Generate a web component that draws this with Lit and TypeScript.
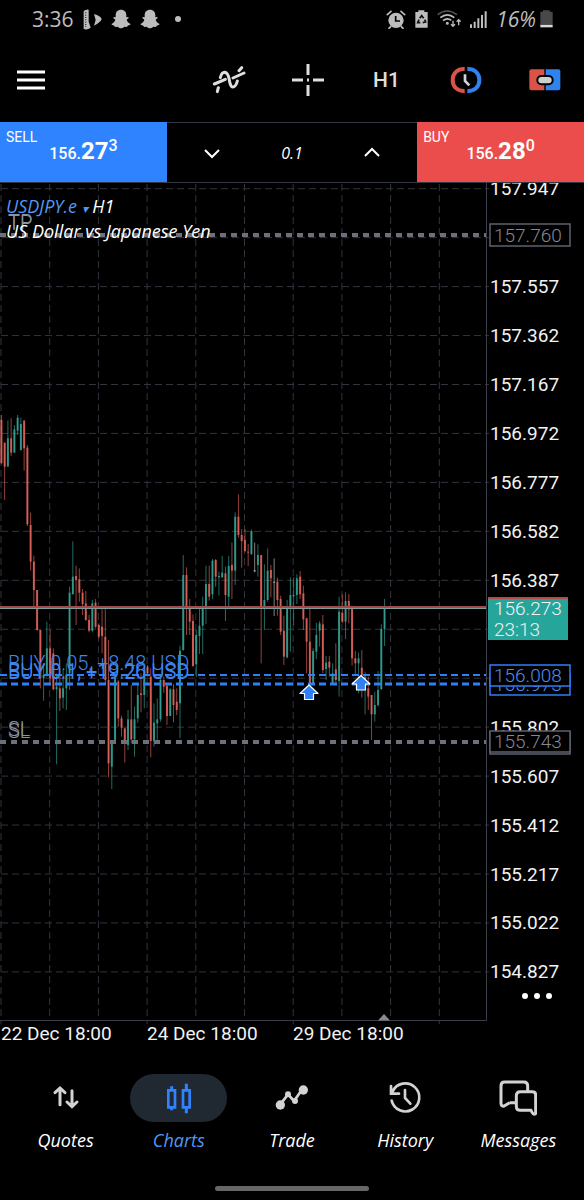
import { LitElement, html, svg, css } from "lit";
import { customElement, property, state } from "lit/decorators.js";

type Tone = "r" | "g" | "w";
// tone, wick top, body top, body bottom, wick bottom
type Bar = [Tone, number, number, number, number];

const STEP = 3.247;
const TOP = 183;

// Bar levels are stored in thirds of a unit, counted down from each group's base.
const GROUPS: { base: number; bars: Bar[] }[] = [
  {
    base: 400,
    bars: [
      ["r", 45, 60, 190, 190], ["r", 128, 128, 200, 300], ["g", 62, 115, 200, 200], ["r", 55, 115, 158, 168],
      ["g", 75, 88, 158, 158], ["g", 45, 53, 92, 105], ["g", 53, 72, 150, 152], ["r", 60, 62, 145, 212],
      ["r", 135, 143, 373, 378], ["r", 338, 375, 485, 512], ["r", 467, 485, 570, 618], ["r", 570, 570, 690, 692],
      ["r", 690, 690, 835, 865], ["g", 790, 825, 835, 902], ["g", 665, 745, 825, 830], ["r", 690, 745, 835, 850],
      ["r", 745, 760, 868, 870], ["g", 820, 860, 868, 1093], ["r", 797, 865, 895, 933], ["g", 810, 865, 893, 925],
      ["g", 790, 825, 865, 930], ["g", 560, 578, 820, 870], ["g", 424, 530, 583, 583], ["r", 497, 528, 540, 675],
      ["r", 505, 538, 578, 605], ["r", 567, 578, 612, 645], ["r", 573, 610, 660, 662], ["r", 645, 660, 692, 697],
      ["g", 600, 610, 692, 697], ["r", 597, 608, 680, 685], ["r", 670, 675, 710, 715], ["r", 620, 680, 708, 760],
      ["r", 620, 710, 840, 852], ["r", 720, 840, 1090, 1132], ["g", 1030, 1030, 1100, 1167], ["g", 835, 835, 1028, 1030],
    ],
  },
  {
    base: 480,
    bars: [
      ["r", 600, 605, 715, 740], ["r", 707, 715, 743, 770], ["r", 745, 745, 790, 848], ["g", 690, 718, 795, 810],
      ["r", 615, 718, 778, 790], ["g", 680, 718, 778, 830], ["g", 615, 645, 715, 728], ["r", 580, 640, 645, 697],
      ["g", 560, 570, 645, 685], ["r", 555, 560, 580, 590], ["r", 565, 590, 783, 832], ["g", 670, 728, 783, 800],
      ["g", 655, 718, 730, 780], ["g", 590, 600, 718, 725], ["r", 590, 600, 620, 638], ["r", 615, 618, 708, 735],
      ["g", 625, 628, 708, 708], ["r", 612, 628, 675, 727], ["r", 625, 665, 690, 705], ["g", 497, 512, 670, 775],
      ["g", 225, 285, 510, 512], ["r", 262, 285, 385, 465], ["r", 357, 380, 425, 465], ["r", 403, 423, 558, 560],
      ["g", 450, 465, 553, 592], ["g", 380, 437, 468, 522], ["g", 350, 380, 437, 522], ["g", 257, 312, 380, 432],
      ["r", 257, 312, 350, 362], ["g", 237, 242, 343, 357], ["r", 237, 240, 290, 320], ["g", 275, 288, 292, 347],
      ["g", 228, 278, 292, 293], ["r", 260, 280, 345, 423], ["g", 228, 258, 350, 385], ["r", 187, 255, 272, 357],
      ["g", 97, 110, 272, 315], ["r", 43, 110, 165, 173],
    ],
  },
  {
    base: 500,
    bars: [
      ["r", 87, 105, 123, 203], ["r", 87, 120, 153, 155], ["r", 132, 155, 158, 198], ["g", 88, 93, 162, 165],
      ["w", 128, 211, 214, 217], ["g", 133, 165, 195, 230], ["r", 165, 165, 325, 490], ["g", 193, 300, 325, 390],
      ["g", 145, 212, 300, 305], ["r", 195, 210, 235, 292], ["w", 175, 245, 248, 348], ["r", 233, 245, 300, 347],
      ["r", 287, 297, 395, 405], ["r", 347, 392, 470, 495], ["g", 300, 325, 472, 475], ["g", 232, 285, 325, 455],
      ["g", 232, 285, 288, 375], ["g", 223, 235, 285, 312], ["r", 213, 230, 283, 297], ["r", 257, 280, 358, 390],
      ["r", 353, 355, 425, 520], ["r", 317, 425, 550, 550], ["g", 445, 453, 550, 553], ["g", 368, 405, 455, 478],
      ["g", 363, 370, 392, 440], ["r", 345, 373, 510, 520], ["g", 468, 488, 507, 540], ["r", 468, 485, 503, 530],
      ["g", 490, 520, 550, 555], ["r", 430, 508, 540, 555], ["g", 290, 335, 543, 590], ["r", 283, 338, 365, 370],
      ["g", 277, 303, 365, 417], ["r", 282, 303, 328, 370], ["r", 317, 325, 475, 497], ["r", 453, 475, 490, 522],
      ["g", 457, 475, 490, 580], ["r", 450, 503, 525, 593], ["g", 515, 530, 560, 643], ["r", 530, 565, 590, 630],
      ["r", 585, 585, 643, 720], ["g", 575, 615, 643, 665], ["g", 513, 570, 615, 620], ["g", 373, 387, 567, 570],
      ["g", 297, 325, 388, 438],
    ],
  },
];

const GRID_PRICES = Array.from({ length: 17 }, (_, i) => 157.947 - i * 0.195);
const COVERED = [9, 10];
const priceY = (p: number) => 286.6 + ((157.557 - p) / 0.195) * 48.95;

@customElement("price-chart")
export class PriceChart extends LitElement {
  static styles = css`
    :host { display: block; position: relative; }
    .canvas { display: block; width: 100%; height: auto; font-family: Roboto, "Liberation Sans", sans-serif; font-size: 19px; fill: #f2f2f2; }
    .grid { stroke: #32343e; stroke-width: 1; stroke-dasharray: 7 4; fill: none; }
    .frame { stroke: #3b3d49; stroke-width: 1; fill: none; }
    .r { stroke: #e5655d; }
    .g { stroke: #35a595; }
    .w { stroke: #c4c8c8; }
    .wick { stroke-width: 1; opacity: 0.65; }
    .body { stroke-width: 2; opacity: 0.85; }
    .stop { stroke: #6d6f7b; stroke-width: 4; stroke-dasharray: 6 5; }
    .pos { stroke: #2f7ff5; stroke-width: 3; stroke-dasharray: 7 4; }
    .thin { stroke-width: 2; }
    .ask { stroke: #a04a4b; stroke-width: 2; }
    .bid { stroke: #7d9c9a; stroke-width: 1; }
    .trade { fill: #3f86f0; font-weight: 300; font-size: 20px; }
    .limit { fill: #8b93a5; font-weight: 300; font-size: 20px; }
    .tag { fill: #000; stroke-width: 1.5; }
    .tag-stop { stroke: #5f626e; }
    .tag-pos { stroke: #2f7ff5; }
    .text-stop { fill: #858793; font-weight: 300; }
    .text-pos { fill: #4c8df0; font-weight: 300; }
    .last { fill: #26a69a; }
    .last-edge { fill: #b84a4a; }
    .arrow { fill: #2f7ff5; stroke: #fff; stroke-width: 1.2; stroke-linejoin: round; }
    .now { fill: #8a8a8a; }
    .caption { position: absolute; top: 12px; left: 6px; font: italic 18px/23px "Open Sans", sans-serif; color: #fff; }
    .caption p { margin: 0; }
    .symbol { all: unset; color: #5296f5; cursor: pointer; }
    .caret { font-size: 12px; }
    .more { position: absolute; right: 29px; bottom: 43px; padding: 8px 0; border: 0; background: none; display: flex; cursor: pointer; }
  `;

  private bars() {
    let i = 0;
    return GROUPS.map(({ base, bars }) =>
      bars.map(([tone, high, top, bottom, low]) => {
        const x = 1.4 + STEP * i++;
        const y = (v: number) => base + v / 3;
        return svg`<line class="wick ${tone}" x1=${x} x2=${x} y1=${y(high)} y2=${y(low)} />
          <line class="body ${tone}" x1=${x} x2=${x} y1=${y(top)} y2=${y(bottom)} />`;
      }),
    );
  }

  private arrow(x: number, y: number) {
    return svg`<path class="arrow" d="M${x} ${y}l9 8.5h-4.5v6h-9v-6h-4.500z" />`;
  }

  render() {
    return html`
      <svg class="canvas" viewBox="0 ${TOP} 584 867" role="img" aria-label="USDJPY.e H1 price chart">
        ${Array.from({ length: 10 }, (_, i) => {
          const x = 1 + i * 48.7;
          return svg`<line class="grid" x1=${x} x2=${x} y1="184" y2=${i % 3 ? 1020 : 1024} />`;
        })}
        ${GRID_PRICES.map((p) => svg`<line class="grid" x1="1" x2="489" y1=${priceY(p)} y2=${priceY(p)} />`)}
        <path class="frame" d="M0 1020.500H486.500V183" />
        ${this.bars()}
        <path class="now" d="M378 1020.500l6-6.500 6 6.500z" />
        <line class="ask" x1="0" x2="486" y1="607" y2="607" />
        <line class="bid" x1="0" x2="486" y1="608.500" y2="608.500" />
        <line class="stop" x1="0" x2="486" y1="235" y2="235" />
        <line class="stop" x1="0" x2="486" y1="742" y2="742" />
        <line class="pos thin" x1="0" x2="486" y1="675" y2="675" />
        <line class="pos" x1="0" x2="486" y1="684" y2="684" />
        <text class="limit" x="8" y="229">TP</text>
        <text class="limit" x="8" y="230">TP</text>
        <text class="limit" x="8" y="736">SL</text>
        <text class="limit" x="8" y="738">SL</text>
        <text class="trade" x="8" y="670">BUY 0.05, +8.48 USD</text>
        <text class="trade" x="8" y="678">BUY 0.1, +19.20 USD</text>
        <text class="trade" x="8" y="679">BUY 0.1, +19.26 USD</text>
        ${this.arrow(309, 685)} ${this.arrow(361, 675.5)}
        ${GRID_PRICES.map((p, i) =>
          COVERED.includes(i) ? "" : svg`<text x="490" y=${priceY(p) + 6.5}>${p.toFixed(3)}</text>`,
        )}
        <rect class="tag tag-stop" x="490" y="224" width="80" height="22" />
        <text class="text-stop" x="494" y="242">157.760</text>
        <rect class="last" x="488" y="597" width="80" height="43" />
        <rect class="last-edge" x="488" y="597" width="80" height="2" />
        <text font-weight="300" x="494" y="615">156.273</text>
        <text font-weight="300" x="494" y="636">23:13</text>
        <rect class="tag tag-pos" x="490" y="674" width="80" height="21" />
        <text class="text-pos" x="494" y="691">155.973</text>
        <rect class="tag tag-pos" x="490" y="665" width="80" height="21" />
        <text class="text-pos" x="494" y="682">156.008</text>
        <rect class="tag tag-stop" x="490" y="732" width="80" height="22" />
        <rect class="tag tag-stop" x="490" y="731" width="80" height="21" />
        <text class="text-stop" x="494" y="748">155.743</text>
        <text x="1" y="1040">22 Dec 18:00</text>
        <text x="147" y="1040">24 Dec 18:00</text>
        <text x="293" y="1040">29 Dec 18:00</text>
      </svg>
      <div class="caption">
        <p><button class="symbol">USDJPY.e <span class="caret">▾</span></button> H1</p>
        <p>US Dollar vs Japanese Yen</p>
      </div>
      <button class="more" aria-label="More">
        <svg width="36" height="6" viewBox="0 0 36 6" fill="#fff"><circle cx="6" cy="3" r="3" /><circle cx="18" cy="3" r="3" /><circle cx="30" cy="3" r="3" /></svg>
      </button>
    `;
  }
}

const ghost = html`<svg width="20" height="20" viewBox="0 0 60 60" fill="#bdbdbd"><path d="M30 2C20 2 14 9 14 18v7l-6-1-1 3 6 5C11 38 7 42 2 44v3l8 3 2 4 8-1c4 4 7 5 10 5s6-1 10-5l8 1 2-4 8-3v-3c-5-2-9-6-11-12l6-5-1-3-6 1v-7C46 9 40 2 30 2z" /></svg>`;

@customElement("status-bar")
export class StatusBar extends LitElement {
  static styles = css`
    :host { display: flex; justify-content: space-between; align-items: center; height: 38px; padding: 0 31px 0 32px; color: #bdbdbd; font: italic 21px/28px "Open Sans", sans-serif; }
    .side { display: flex; align-items: center; gap: 9px; }
    .time { font-style: normal; }
    .dot { width: 6px; height: 6px; border-radius: 50%; background: #bdbdbd; margin-left: 6px; }
    .charge { display: flex; align-items: center; gap: 4px; }
    svg { display: block; }
  `;
  render() {
    return html`
      <div class="side">
        <span class="time">3:36</span>
        <svg width="19" height="21" viewBox="0 0 57 63" fill="#bdbdbd"><path d="M2 6q8-6 15-4v36l6 18q-10 8-21 4z" /><path d="M33 15q20 6 23 15-3 10-23 20l5-17z" /><path d="M8 10v44" stroke="#333" stroke-width="4" stroke-dasharray="3 4" /></svg>
        ${ghost} ${ghost}
        <span class="dot"></span>
      </div>
      <div class="side">
        <svg width="20" height="19" viewBox="0 0 60 57"><path d="M4 14L15 4M56 14L45 4M14 50l-5 5M46 50l5 5" stroke="#bdbdbd" stroke-width="5" stroke-linecap="round" /><circle cx="30" cy="31" r="23" fill="#bdbdbd" /><path d="M29 18v15h13" fill="none" stroke="#000" stroke-width="5" /></svg>
        <svg width="13" height="18" viewBox="0 0 39 54"><path d="M10 6V1h18v5h10v47H1V6z" fill="#bdbdbd" /><path d="M14 25l6-8 6 8M29 29l3 7-9 2M16 38H8l4-9" fill="none" stroke="#111" stroke-width="5" /></svg>
        <svg width="24" height="18" viewBox="0 0 72 54" fill="none" stroke="#bdbdbd" stroke-width="5"><path d="M2 14q28-22 58 0" stroke="#555" /><path d="M10 23q21-17 42 0M18 32q13-10 25-1" /><circle cx="31" cy="40" r="2" /><path d="M48 32v17M42 43l6 6 6-6M65 46V29M59 35l6-6 6 6" stroke-width="4" /></svg>
        <svg width="17" height="17" viewBox="0 0 51 51" stroke="#bdbdbd" stroke-width="6"><path d="M3 51V40M14 51V32M25 51V22M36 51V12M47 51V1" /></svg>
        <span class="charge">
          16%
          <svg width="13" height="18" viewBox="0 0 39 54"><path d="M9 5V1h20v4h9v38H1V5z" fill="#484848" /><path d="M1 44h37v8H1z" fill="#d8d8d8" /></svg>
        </span>
      </div>
    `;
  }
}

@customElement("trade-panel")
export class TradePanel extends LitElement {
  static styles = css`
    :host { display: grid; grid-template-columns: 2fr 3fr 2fr; height: 61px; box-sizing: border-box; border-bottom: 1px solid #343642; background: #000; }
    .deal { position: relative; border: 0; padding: 0; color: #fff; font-family: Roboto, sans-serif; cursor: pointer; }
    .sell { background: #3083ff; }
    .buy { background: #ea4d4b; }
    .side { position: absolute; top: 6px; left: 6px; font-size: 14px; line-height: 18px; }
    .price { display: flex; justify-content: center; align-items: baseline; font-size: 16px; font-weight: 500; line-height: 28px; }
    .big { font-size: 24px; font-weight: 700; }
    .pip { align-self: flex-start; line-height: 18px; }
    .volume { display: flex; align-items: center; justify-content: space-between; padding: 0 34px; border-top: 1px solid #343642; }
    .step { display: flex; border: 0; padding: 0; background: none; cursor: pointer; }
    .lots { width: 60px; border: 0; padding: 0; background: none; color: #fff; text-align: center; font: italic 16px/24px "Open Sans", sans-serif; outline: 0; }
    .step path { fill: none; stroke: #fff; stroke-width: 2; }
  `;
  @state() private lots = "0.1";

  private bump(by: number) {
    this.lots = Math.max(0.1, Number(this.lots) + by).toFixed(1);
  }

  private deal(kind: string, label: string, small: string, big: string, pip: string) {
    return html`<button class="deal ${kind}">
      <span class="side">${label}</span>
      <span class="price">${small}<span class="big">${big}</span><span class="pip">${pip}</span></span>
    </button>`;
  }

  render() {
    return html`
      ${this.deal("sell", "SELL", "156.", "27", "3")}
      <div class="volume">
        <button class="step" aria-label="Decrease volume" @click=${() => this.bump(-0.1)}>
          <svg width="22" height="22" viewBox="0 0 22 22"><path d="M4 8l7 7 7-7" /></svg>
        </button>
        <input class="lots" aria-label="Volume" .value=${this.lots} />
        <button class="step" aria-label="Increase volume" @click=${() => this.bump(0.1)}>
          <svg width="22" height="22" viewBox="0 0 22 22"><path d="M4 14l7-7 7 7" /></svg>
        </button>
      </div>
      ${this.deal("buy", "BUY", "156.", "28", "0")}
    `;
  }
}

const navIcons: Record<string, unknown> = {
  Quotes: svg`<path d="M20 56V8M5 20L20 6l15 14M56 14v48M41 48l15 14 15-14" transform="translate(19 21)" stroke-width="9" stroke-linecap="round" />`,
  Charts: svg`<g stroke="#3083ff"><path d="M35 22v12M35 86v8M79 14v18M79 86v17" stroke-width="9" /><path d="M25 34h20v51H25zM69 34h20v51H69z" stroke-width="8" /></g>`,
  Trade: svg`<path d="M22 76L45 46l18 20 27-38" stroke-width="8" /><g fill="#d2d2d2" stroke="none"><circle cx="22" cy="78" r="14" /><circle cx="45" cy="46" r="9" /><circle cx="66" cy="66" r="9" /><circle cx="91" cy="33" r="14" /></g>`,
  History: svg`<path d="M17 64a42 42 0 1 0 3-28M15 20v23h24M57 32v24l16 17" stroke-width="8" stroke-linecap="round" transform="translate(0 1)" />`,
  Messages: svg`<path d="M32 71L14 82q-7 0-8-8V20Q6 9 17 9h58q11 0 11 12v16M32 71h20" stroke-width="9" stroke-linejoin="round" /><path d="M64 38h36q10 0 10 10v56q-8 6-14-10H64q-12 0-12-12V50q0-12 12-12z" stroke-width="9" stroke-linejoin="round" />`,
};

@customElement("tab-bar")
export class TabBar extends LitElement {
  static styles = css`
    :host { display: block; }
    .tabs { display: grid; grid-template-columns: repeat(5, 1fr); padding: 0 9px; }
    .tab { display: flex; flex-direction: column; align-items: center; gap: 5px; color: #fff; text-decoration: none; font: italic 18px/26px "Open Sans", sans-serif; }
    .pill { width: 97px; height: 48px; border-radius: 24px; display: grid; place-items: center; }
    .active { color: #5296f5; }
    .active .pill { background: #202832; }
  `;
  @property() active = "Charts";
  render() {
    return html`<nav class="tabs">
      ${Object.keys(navIcons).map(
        (name) => html`<a class="tab ${name === this.active ? "active" : ""}" href="#${name.toLowerCase()}">
          <span class="pill"><svg width="38" height="38" viewBox="0 0 114 114" fill="none" stroke="#d2d2d2">${navIcons[name]}</svg></span>
          ${name}
        </a>`,
      )}
    </nav>`;
  }
}

@customElement("app-root")
export class AppRoot extends LitElement {
  static styles = css`
    :host { display: block; min-height: 100vh; background: #000; }
    .tools { display: flex; align-items: center; height: 84px; }
    .tool { width: 79px; height: 48px; padding: 0; border: 0; background: none; display: grid; place-items: center; color: #dedede; cursor: pointer; font: 500 21px/28px Roboto, sans-serif; }
    .menu { width: auto; padding: 0 17px; margin-right: auto; }
    .tabs { margin-top: 24px; }
    .home { width: 154px; height: 5px; border-radius: 3px; background: #666; margin: 33px auto 9px; }
  `;
  render() {
    return html`
      <status-bar></status-bar>
      <header class="tools">
        <button class="tool menu" aria-label="Menu">
          <svg width="28" height="20" viewBox="0 0 28 20" stroke="#fff" stroke-width="3"><path d="M0 2h28M0 10h28M0 18h28" /></svg>
        </button>
        <button class="tool" aria-label="Indicators">
          <svg width="34" height="28" viewBox="0 0 102 84" fill="none" stroke="#dedede" stroke-width="9" stroke-linecap="round"><path d="M7 54l33-14M16 77l3-12M25 35q4-16 13-16 9 1 13 18 4 28 12 26 9-1 13-18M63 36l33-15M81 14l8-9" /></svg>
        </button>
        <button class="tool" aria-label="Crosshair">
          <svg width="32" height="32" viewBox="0 0 32 32" stroke="#dedede" stroke-width="3"><path d="M16 0v11M16 21v11M0 16h11M21 16h11M15 16h2" /></svg>
        </button>
        <button class="tool">H1</button>
        <button class="tool" aria-label="Trading sessions">
          <svg width="32" height="28" viewBox="0 0 96 84" fill="none" stroke-width="12"><path d="M44 9C22 8 8 22 8 42s14 34 36 33" stroke="#d95348" /><path d="M52 9c22-1 36 13 36 33S74 76 52 75" stroke="#3083ee" /><path d="M45 25v20l13 13" stroke="#cfd4dc" stroke-width="8" /></svg>
        </button>
        <button class="tool" aria-label="One-click trading">
          <svg width="32" height="22" viewBox="0 0 96 66"><path d="M46 1H7Q1 1 1 7v50q0 7 6 7h39z" fill="#d95348" /><path d="M50 1h38q6 0 6 6v50q0 7-6 7H50z" fill="#3083ee" /><rect x="25" y="21" width="46" height="25" rx="12" fill="#cfcfcf" stroke="#000" stroke-width="6" /></svg>
        </button>
      </header>
      <trade-panel></trade-panel>
      <price-chart></price-chart>
      <tab-bar class="tabs"></tab-bar>
      <div class="home"></div>
    `;
  }
}
